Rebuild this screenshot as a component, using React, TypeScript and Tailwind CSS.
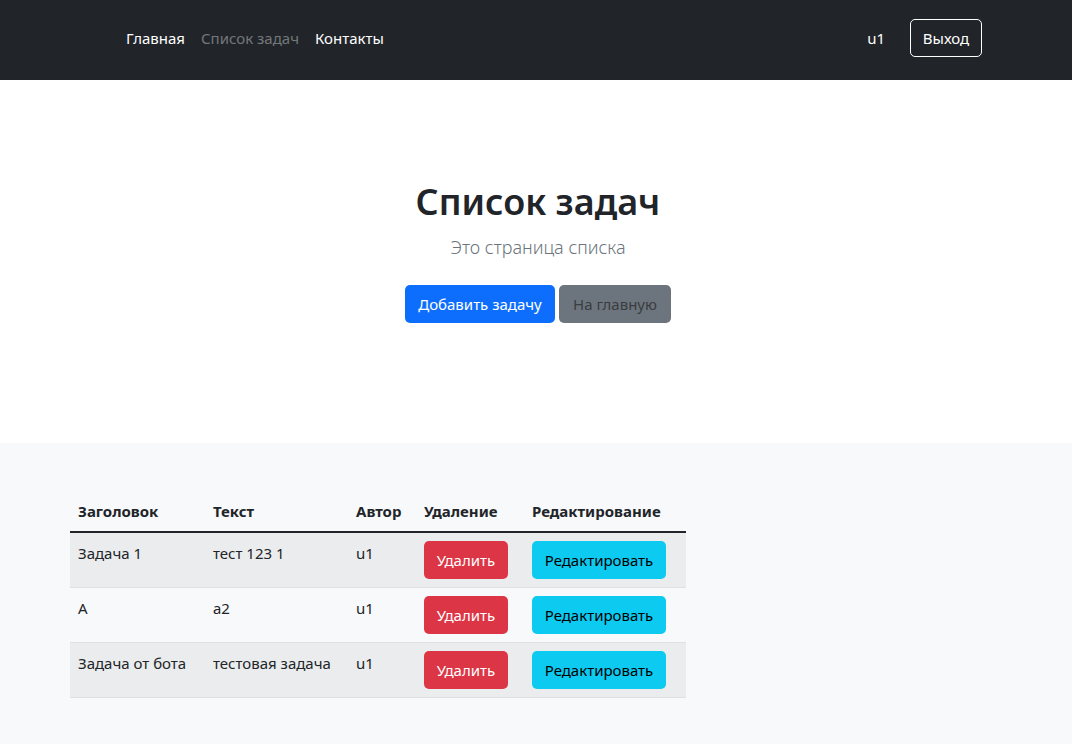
import React from 'react';

const rows = [
  { title: 'Задача 1', text: 'тест 123 1', author: 'u1' },
  { title: 'А', text: 'а2', author: 'u1' },
  { title: 'Задача от бота', text: 'тестовая задача', author: 'u1' },
];

const App: React.FC = () => {
  return (
    <div className="min-h-screen bg-[#f8f9fa] text-[#212529] text-[15px]" style={{ fontFamily: '"Noto Sans", "Open Sans", sans-serif' }}>
      {/* Navbar */}
      <nav className="h-[80px] bg-[#212529] flex items-center justify-between pl-[118px] pr-[90px] pb-[4px]">
        <div className="flex items-center">
          <a className="px-2 text-white leading-6">Главная</a>
          <a className="px-2 text-[#73777b] leading-6">Список задач</a>
          <a className="px-2 text-white leading-6">Контакты</a>
        </div>
        <div className="flex items-center gap-[25px]">
          <span className="text-white">u1</span>
          <button className="h-[38px] w-[72px] border border-white rounded-[5px] text-white">Выход</button>
        </div>
      </nav>

      {/* Hero */}
      <section className="h-[363px] bg-white flex flex-col items-center pt-[98px] pl-1">
        <h1 className="text-[36px] leading-[48px] font-semibold mb-[6px]">Список задач</h1>
        <p className="text-[18px] leading-[30px] font-light text-[#6c757d] mb-[23px]">Это страница списка</p>
        <div className="flex gap-1">
          <button className="h-[38px] w-[150px] rounded-[5px] bg-[#0d6efd] text-white">Добавить задачу</button>
          <button className="h-[38px] w-[112px] rounded-[5px] bg-[#6c757d] text-[#3a3d40]">На главную</button>
        </div>
      </section>

      {/* Table */}
      <section className="pt-12 pb-12 pl-[70px]">
        <table className="table-fixed border-collapse w-[616px]">
          <thead>
            <tr className="border-b-2 border-[#212529]">
              <th className="w-[135px] text-left font-bold px-2 py-2 leading-6 whitespace-nowrap">Заголовок</th>
              <th className="w-[143px] text-left font-bold px-2 py-2 leading-6 whitespace-nowrap">Текст</th>
              <th className="w-[68px] text-left font-bold px-2 py-2 leading-6 whitespace-nowrap">Автор</th>
              <th className="w-[108px] text-left font-bold px-2 py-2 leading-6 whitespace-nowrap">Удаление</th>
              <th className="w-[162px] text-left font-bold px-2 py-2 leading-6 whitespace-nowrap">Редактирование</th>
            </tr>
          </thead>
          <tbody>
            {rows.map((r, i) => (
              <tr key={i} className={`border-b border-[#dee2e6] ${i % 2 === 0 ? 'bg-[#ebeced]' : ''}`}>
                <td className="align-top px-2 py-2 leading-6 whitespace-nowrap">{r.title}</td>
                <td className="align-top px-2 py-2 leading-6 whitespace-nowrap">{r.text}</td>
                <td className="align-top px-2 py-2 leading-6 whitespace-nowrap">{r.author}</td>
                <td className="align-top px-2 py-2">
                  <button className="h-[38px] w-[84px] rounded-[5px] bg-[#dc3545] text-white">Удалить</button>
                </td>
                <td className="align-top px-2 py-2">
                  <button className="h-[38px] w-[134px] rounded-[5px] bg-[#0dcaf0] text-black whitespace-nowrap">Редактировать</button>
                </td>
              </tr>
            ))}
          </tbody>
        </table>
      </section>
    </div>
  );
};

export default App;
